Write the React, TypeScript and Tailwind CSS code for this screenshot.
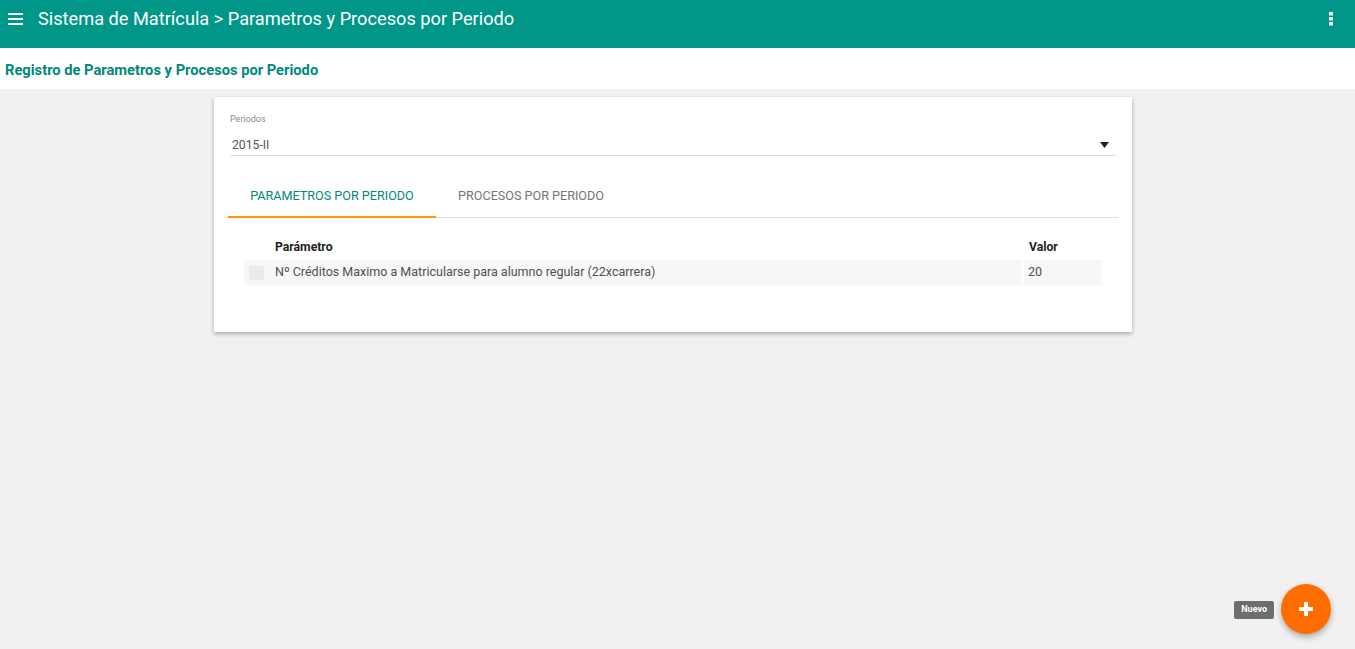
import React from 'react';

const App: React.FC = () => {
  return (
    <div className="min-h-[649px] bg-[#f1f1f1] flex flex-col font-['Roboto',sans-serif]">
      <header className="h-[48px] bg-[#009688] flex items-center pl-[8px] pr-[22px] pb-[10px] text-white">
        <svg width="15" height="12" viewBox="0 0 15 12" className="mr-[15px]">
          <rect x="0" y="0" width="15" height="2" fill="white" />
          <rect x="0" y="5" width="15" height="2" fill="white" />
          <rect x="0" y="10" width="15" height="2" fill="white" />
        </svg>
        <h1 className="text-[18.2px] leading-none flex-1">
          Sistema de Matrícula &gt; Parametros y Procesos por Periodo
        </h1>
        <svg width="4" height="14" viewBox="0 0 4 14">
          <rect x="0" y="0" width="4" height="3.5" fill="white" />
          <rect x="0" y="5" width="4" height="3.5" fill="white" />
          <rect x="0" y="10" width="4" height="3.5" fill="white" />
        </svg>
      </header>

      <div className="h-[41px] bg-white flex items-center px-[5px] pt-[3px]">
        <h2 className="text-[14.7px] font-bold text-[#00897b]">
          Registro de Parametros y Procesos por Periodo
        </h2>
      </div>

      <main className="flex justify-center pt-[8px] pr-[9px]">
        <div className="w-[918px] h-[235px] bg-white shadow-[0_2px_4px_rgba(0,0,0,0.3)] pl-[14px] pr-[14px] pt-[18px]">
          <div className="pl-[2px] pr-[2px]">
            <label className="block text-[9px] text-[#8a8a8a] leading-none">Periodos</label>
            <div className="mt-[9px] h-[23px] flex items-center justify-between border-b border-[#dcdcdc] pt-[2px] pl-[2px]">
              <span className="text-[12.2px] text-[#555]">2015-II</span>
              <svg width="9" height="6" viewBox="0 0 9 6" className="mr-[7px]">
                <path d="M0 0 H9 L4.5 6 Z" fill="#222" />
              </svg>
            </div>
          </div>

          <div className="mt-[19px] flex border-b border-[#e0e0e0] h-[43px]">
            <div className="w-[208px] flex items-center justify-center border-b-2 border-[#ff9800] text-[12.6px] text-[#00897b] -mb-px pt-[1px]">
              PARAMETROS POR PERIODO
            </div>
            <div className="w-[190px] flex items-center justify-center text-[12.6px] text-[#757575] pt-[1px]">
              PROCESOS POR PERIODO
            </div>
          </div>

          <div className="mt-[21px] pl-[16px] pr-[16px]">
            <div className="flex h-[16px] items-center text-[12.2px] font-bold text-[#222]">
              <div className="w-[31px]" />
              <div className="flex-1">Parámetro</div>
              <div className="w-[78px] pl-[5px]">Valor</div>
            </div>
            <div className="flex h-[25px] mt-[5px] bg-[#f7f7f7] items-center text-[12.5px] text-[#505050]">
              <div className="w-[25px] h-full flex items-center justify-center">
                <div className="w-[15px] h-[14px] bg-[#ebebeb] rounded-[2px]" />
              </div>
              <div className="flex-1 h-full flex items-center pl-[6px] border-r-2 border-white">
                Nº Créditos Maximo a Matricularse para alumno regular (22xcarrera)
              </div>
              <div className="w-[78px] pl-[4px]">20</div>
            </div>
          </div>
        </div>
      </main>

      <div className="fixed right-[24px] bottom-[15px] flex items-center gap-[7px]">
        <div className="bg-[#6e6e6e] text-white text-[9px] font-bold px-[7px] h-[18px] flex items-center rounded-[2px] mt-[2px]">
          Nuevo
        </div>
        <button className="w-[50px] h-[50px] rounded-full bg-[#ff6d00] shadow-[0_3px_6px_rgba(0,0,0,0.3)] flex items-center justify-center">
          <svg width="14" height="14" viewBox="0 0 14 14">
            <rect x="5" y="0" width="4" height="14" fill="white" />
            <rect x="0" y="5" width="14" height="4" fill="white" />
          </svg>
        </button>
      </div>
    </div>
  );
};

export default App;
